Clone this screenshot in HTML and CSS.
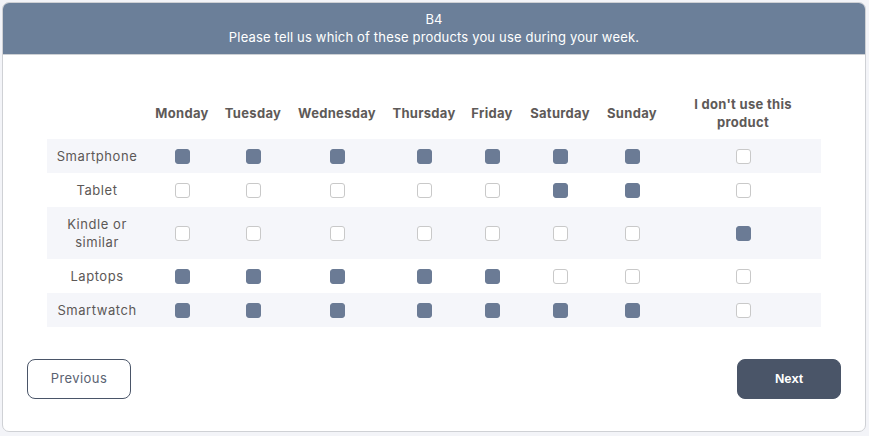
FILE: index.html
```html
<!DOCTYPE html>
<html lang="en">
<head>
<meta charset="utf-8">
<title>B4</title>
<link rel="stylesheet" href="styles.css">
</head>
<body>
<div class="card">
  <div class="qhead">
    <div>B4</div>
    <div>Please tell us which of these products you use during your week.</div>
  </div>
  <div class="qbody">
    <table class="grid">
      <colgroup>
        <col class="c-label"><col class="c-mon"><col class="c-tue"><col class="c-wed"><col class="c-thu"><col class="c-fri"><col class="c-sat"><col class="c-sun"><col class="c-none">
      </colgroup>
      <thead>
        <tr>
          <th></th><th>Monday</th><th>Tuesday</th><th>Wednesday</th><th>Thursday</th><th>Friday</th><th>Saturday</th><th>Sunday</th><th class="wrap">I don't use this product</th>
        </tr>
      </thead>
      <tbody>
        <tr class="alt">
          <td class="lbl">Smartphone</td>
          <td><span class="cb on"></span></td><td><span class="cb on"></span></td><td><span class="cb on"></span></td><td><span class="cb on"></span></td><td><span class="cb on"></span></td><td><span class="cb on"></span></td><td><span class="cb on"></span></td><td><span class="cb"></span></td>
        </tr>
        <tr>
          <td class="lbl">Tablet</td>
          <td><span class="cb"></span></td><td><span class="cb"></span></td><td><span class="cb"></span></td><td><span class="cb"></span></td><td><span class="cb"></span></td><td><span class="cb on"></span></td><td><span class="cb on"></span></td><td><span class="cb"></span></td>
        </tr>
        <tr class="alt">
          <td class="lbl">Kindle or<br>similar</td>
          <td><span class="cb"></span></td><td><span class="cb"></span></td><td><span class="cb"></span></td><td><span class="cb"></span></td><td><span class="cb"></span></td><td><span class="cb"></span></td><td><span class="cb"></span></td><td><span class="cb on"></span></td>
        </tr>
        <tr>
          <td class="lbl">Laptops</td>
          <td><span class="cb on"></span></td><td><span class="cb on"></span></td><td><span class="cb on"></span></td><td><span class="cb on"></span></td><td><span class="cb on"></span></td><td><span class="cb"></span></td><td><span class="cb"></span></td><td><span class="cb"></span></td>
        </tr>
        <tr class="alt">
          <td class="lbl">Smartwatch</td>
          <td><span class="cb on"></span></td><td><span class="cb on"></span></td><td><span class="cb on"></span></td><td><span class="cb on"></span></td><td><span class="cb on"></span></td><td><span class="cb on"></span></td><td><span class="cb on"></span></td><td><span class="cb"></span></td>
        </tr>
      </tbody>
    </table>
  </div>
  <div class="nav">
    <button class="btn prev">Previous</button>
    <button class="btn next">Next</button>
  </div>
</div>
</body>
</html>
```

FILE: styles.css
```css
* { box-sizing: border-box; }
html, body { margin: 0; padding: 0; }
body {
  background: #f3f4f8;
  padding: 2px 3px 0 2px;
  font-family: Inter, "Open Sans", sans-serif;
  font-size: 13px;
  color: #555;
}
.card {
  background: #fff;
  border: 1px solid #cfd1d5;
  border-radius: 7px;
  height: 430px;
  overflow: hidden;
}
.qhead {
  background: #6b7f99;
  color: #fff;
  text-align: center;
  line-height: 18px;
  padding: 8px 0 6px;
  border-bottom: 1px solid #cdd0d4;
  height: 53px;
  margin: -1px -1px 0;
  letter-spacing: 0.17px;
}
.qbody {
  padding: 31px 44px 0;
}
.grid {
  width: 774px;
  border-collapse: collapse;
  table-layout: fixed;
}
.c-label { width: 100px; }
.c-mon { width: 70px; }
.c-tue { width: 72px; }
.c-wed { width: 96px; }
.c-thu { width: 78px; }
.c-fri { width: 58px; }
.c-sat { width: 78px; }
.c-sun { width: 66px; }
.c-none { width: 156px; }
.grid th {
  font-weight: 700;
  color: #5e5a58;
  line-height: 18px;
  padding: 8px 0;
  text-align: center;
  height: 53px;
  letter-spacing: 0.3px;
}
.grid th.wrap { padding: 8px 24px; }
.grid td {
  text-align: center;
  padding: 8px 0;
  line-height: 18px;
  height: 34px;
  vertical-align: middle;
}
.grid td.lbl { color: #5c5856; letter-spacing: 0.55px; }
.grid tr.alt td { background: #f5f6fa; }
.cb {
  display: block;
  margin: 0 auto;
  width: 15px;
  height: 15px;
  border: 1px solid #c9c9c9;
  border-radius: 3px;
  background: #fff;
}
.cb.on {
  background: #6b7b95;
  border-color: #6b7b95;
}
.nav {
  display: flex;
  justify-content: space-between;
  padding: 32px 24px 0;
}
.btn {
  width: 104px;
  height: 40px;
  border-radius: 8px;
  font-size: 13px;
  cursor: pointer;
  padding: 0 0 2px;
}
.prev {
  background: #fff;
  border: 1px solid #4a5568;
  color: #5a6272;
  font-family: Inter, "Open Sans", sans-serif;
  letter-spacing: 0.4px;
}
.next {
  background: #4a5568;
  border: 1px solid #4a5568;
  color: #fff;
  font-family: "Liberation Sans", Arial, sans-serif;
  font-weight: 600;
}
```
